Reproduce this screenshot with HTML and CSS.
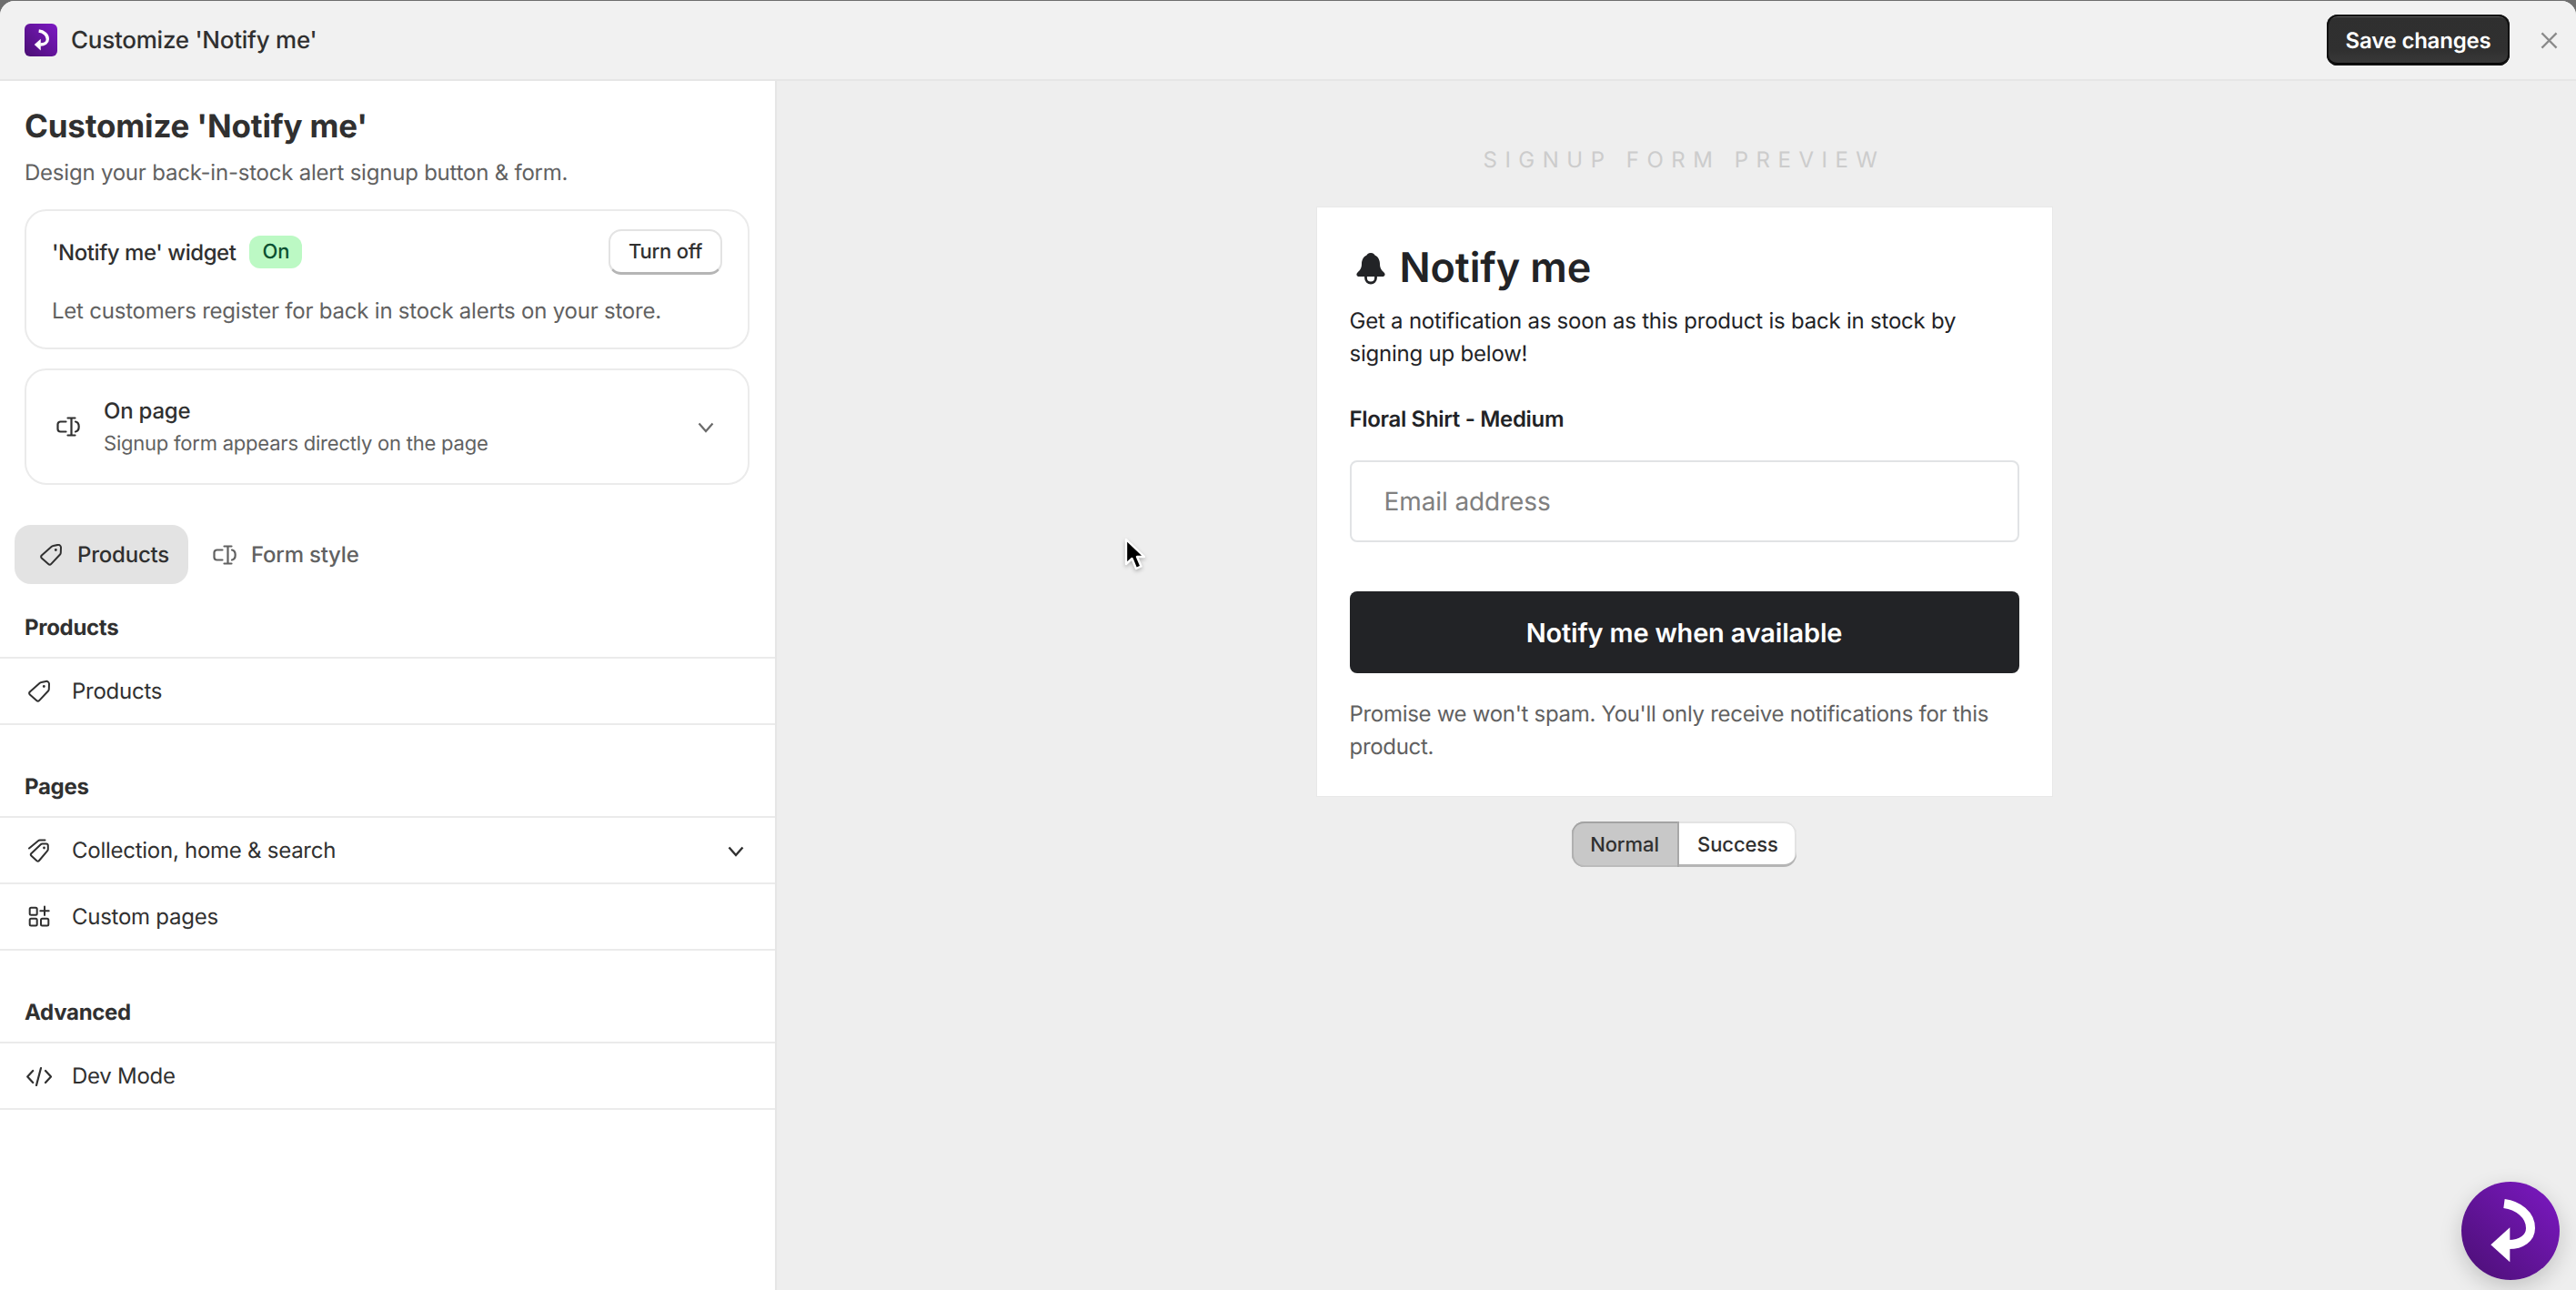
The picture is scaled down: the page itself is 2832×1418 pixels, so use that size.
FILE: index.html
```html
<!DOCTYPE html>
<html lang="en">
<head>
<meta charset="utf-8">
<title>Customize 'Notify me'</title>
<link rel="stylesheet" href="styles.css">
</head>
<body>
<svg class="defs" width="0" height="0">
  <defs>
    <linearGradient id="purple" x1="1" y1="0" x2="0" y2="1">
      <stop offset="0" stop-color="#7d19c4"/>
      <stop offset="1" stop-color="#4a0f73"/>
    </linearGradient>
    <symbol id="swirl" viewBox="0 0 108 108">
      <path d="M47 24C62 26 76 36 76 51C76 62 66 69 52 69" fill="none" stroke="#fff" stroke-width="10"/>
      <path d="M32.300 69.300L53.300 50.300V88.300Z" fill="#fff"/>
    </symbol>
    <symbol id="tag" viewBox="0 0 24 24">
      <path d="M14.500 2L19.500 0.900A3 3 0 0 1 23 3.500L22.800 9.500A3 3 0 0 1 22 11.500L12.300 21.900A2.200 2.200 0 0 1 9.200 22L1.800 15.500A2.300 2.300 0 0 1 1.800 12.500L12.500 3A4 4 0 0 1 14.500 2Z" fill="none" stroke="currentColor" stroke-width="2" stroke-linejoin="round"/>
      <circle cx="17.300" cy="6.500" r="1.400" fill="currentColor"/>
    </symbol>
    <symbol id="form" viewBox="0 0 26 24">
      <path d="M10.500 6.500H4.500A3 3 0 0 0 1.500 9.500V14.500A3 3 0 0 0 4.500 17.500H10.500M12.500 2.500H20.500M16.500 2.500V21.500M12.500 21.500H20.500M21 6.500C23.500 7 24.700 9.500 24.700 12C24.700 14.500 23.500 17 21 17.500" fill="none" stroke="currentColor" stroke-width="2.200" stroke-linecap="round"/>
    </symbol>
  </defs>
</svg>
<div class="app">
  <header class="topbar">
    <svg class="logo" viewBox="0 0 108 108"><rect width="108" height="108" rx="18" fill="url(#purple)"/><use href="#swirl" width="108" height="108"/></svg>
    <span class="topbar-title">Customize 'Notify me'</span>
    <button class="save">Save changes</button>
    <svg class="close" viewBox="0 0 20 20"><path d="M1.500 1.500L18.500 18.500M18.500 1.500L1.500 18.500" fill="none" stroke="#8a8a8a" stroke-width="2.400"/></svg>
  </header>
  <div class="main">
    <aside class="sidebar">
      <div class="intro">
        <h1 class="page-title">Customize 'Notify me'</h1>
        <p class="page-sub">Design your back-in-stock alert signup button &amp; form.</p>
        <section class="card widget-card">
          <div class="widget-row">
            <span class="widget-name">'Notify me' widget</span>
            <span class="badge">On</span>
            <button class="turn-off">Turn off</button>
          </div>
          <p class="widget-desc">Let customers register for back in stock alerts on your store.</p>
        </section>
        <section class="card mode-card">
          <svg class="mode-icon"><use href="#form"/></svg>
          <div class="mode-text">
            <div class="mode-name">On page</div>
            <div class="mode-desc">Signup form appears directly on the page</div>
          </div>
          <svg class="chev chev-grey" viewBox="0 0 18 12"><path d="M1.500 1.500L9 10L16.500 1.500" fill="none" stroke="currentColor" stroke-width="2.200"/></svg>
        </section>
      </div>
      <nav class="tabs">
        <div class="tab tab-active"><svg class="tab-icon"><use href="#tag"/></svg>Products</div>
        <div class="tab tab-idle"><svg class="tab-icon"><use href="#form"/></svg>Form style</div>
      </nav>
      <h2 class="group-title group-first">Products</h2>
      <div class="row"><svg class="row-icon"><use href="#tag"/></svg>Products</div>
      <h2 class="group-title">Pages</h2>
      <div class="row">
        <svg class="row-icon" viewBox="0 0 24 26"><path d="M15.500 5.500H20A1.800 1.800 0 0 1 21.800 7.300V11.500A2.500 2.500 0 0 1 21 13.300L12 24A1.800 1.800 0 0 1 9.500 24.200L3.500 18.700A1.800 1.800 0 0 1 3.300 16.200L13.800 6.200A2.500 2.500 0 0 1 15.500 5.500ZM1 10.500L11 2.300A2.500 2.500 0 0 1 13 1.500H18.500" fill="none" stroke="currentColor" stroke-width="2" stroke-linejoin="round" stroke-linecap="round"/><circle cx="17.500" cy="10" r="1.400" fill="currentColor"/></svg>
        Collection, home &amp; search
        <svg class="chev chev-dark" viewBox="0 0 18 12"><path d="M1.500 1.500L9 10L16.500 1.500" fill="none" stroke="currentColor" stroke-width="2.400"/></svg>
      </div>
      <div class="row">
        <svg class="row-icon" viewBox="0 0 24 26"><path d="M3.200 2.800H8.200A1.500 1.500 0 0 1 9.700 4.300V9.300A1.500 1.500 0 0 1 8.200 10.800H3.200A1.500 1.500 0 0 1 1.700 9.300V4.300A1.500 1.500 0 0 1 3.200 2.800ZM3.200 14.800H8.200A1.500 1.500 0 0 1 9.700 16.300V21A1.500 1.500 0 0 1 8.200 22.500H3.200A1.500 1.500 0 0 1 1.700 21V16.300A1.500 1.500 0 0 1 3.200 14.800ZM15.500 14.800H20.800A1.500 1.500 0 0 1 22.300 16.300V21A1.500 1.500 0 0 1 20.800 22.500H15.500A1.500 1.500 0 0 1 14 21V16.300A1.500 1.500 0 0 1 15.500 14.800ZM18 1.500V10.900M13.300 6.200H22.700" fill="none" stroke="currentColor" stroke-width="2" stroke-linecap="round"/></svg>
        Custom pages
      </div>
      <h2 class="group-title">Advanced</h2>
      <div class="row">
        <svg class="row-icon row-icon-wide" viewBox="0 0 28 24"><path d="M7.200 6L1.200 12.500L7.200 19M21 6L27 12.500L21 19M16 3L11 22" fill="none" stroke="currentColor" stroke-width="2.200" stroke-linecap="round" stroke-linejoin="round"/></svg>
        Dev Mode
      </div>
    </aside>
    <main class="preview">
      <div class="preview-label">SIGNUP FORM PREVIEW</div>
      <section class="form-card">
        <h2 class="form-title">
          <svg class="bell" viewBox="0 0 34 36"><path d="M17 0C20 0 21 1.500 21.500 2.500C25 4 27 8 27 12C27 17 29 19 31.500 21.500C33.500 23.500 32.500 26 30 26H4C1.500 26 0.500 23.500 2.500 21.500C5 19 7 17 7 12C7 8 9 4 12.500 2.500C13 1.500 14 0 17 0Z" fill="#222326"/><path d="M11.500 26V27.500A5.500 5.500 0 0 0 22.500 27.500V26" fill="none" stroke="#222326" stroke-width="2.800"/></svg>
          Notify me
        </h2>
        <p class="form-text">Get a notification as soon as this product is back in stock by signing up below!</p>
        <div class="form-product">Floral Shirt - Medium</div>
        <input class="form-input" type="text" placeholder="Email address">
        <button class="form-button">Notify me when available</button>
        <p class="form-note">Promise we won't spam. You'll only receive notifications for this product.</p>
      </section>
      <div class="segments">
        <button class="seg seg-on">Normal</button>
        <button class="seg seg-off">Success</button>
      </div>
    </main>
  </div>
</div>
<svg class="cursor" viewBox="0 0 24 37"><path d="M3 2V29L9.500 23L14 34L19.500 31.500L15 21H23Z" fill="#000" stroke="#fff" stroke-width="2.400" stroke-linejoin="round"/></svg>
<button class="fab" aria-label="Open"><svg class="fab-art" viewBox="0 0 108 108"><circle cx="54" cy="54" r="54" fill="url(#purple)"/><use href="#swirl" width="108" height="108"/></svg></button>
</body>
</html>
```
FILE: styles.css
```css
* { box-sizing: border-box; }
html, body { margin: 0; height: 100%; overflow: hidden; }
body { background: #6e6e6e; font-family: Inter, "Noto Sans", sans-serif; color: #303030; font-size: 24px; letter-spacing: -0.22px; text-rendering: geometricPrecision; }
button { font-family: inherit; cursor: pointer; text-rendering: geometricPrecision; letter-spacing: inherit; }
h1, h2, p { margin: 0; }
.defs { position: absolute; }

.app { height: 1417px; margin-top: 1px; background: #eeeeee; border-radius: 16px 16px 0 0; overflow: hidden; display: flex; flex-direction: column; }

.topbar { height: 88px; flex: none; display: flex; align-items: center; padding: 0 20px 0 27px; background: #f1f1f1; border-bottom: 2px solid #e6e6e6; }
.logo { width: 36px; height: 36px; flex: none; }
.topbar-title { margin-left: 15px; padding-top: 2px; font-size: 26px; font-weight: 550; line-height: 36px; letter-spacing: -0.25px; }
.save { margin-left: auto; width: 201px; height: 56px; border-radius: 12px; border: 0; color: #fff; font-size: 24px; font-weight: 600; padding: 0; background: linear-gradient(#2f2f2f, #303030 70%, #3a3a3a); box-shadow: inset 0 0 0 2px #111, inset 0 4px 0 -1px #5a5a5a, inset 0 -3px 0 #000; }
.close { width: 19px; height: 19px; margin-left: 34px; flex: none; }

.main { flex: 1; display: flex; min-height: 0; }
.sidebar { width: 854px; flex: none; background: #fff; border-right: 2px solid #e6e6e6; }
.intro { padding: 28px 27px 0; }
.page-title { font-size: 35px; line-height: 44px; font-weight: 650; color: #303030; letter-spacing: -0.18px; }
.page-sub { margin-top: 13px; line-height: 32px; color: #616161; }

.card { border: 2px solid #ebebeb; border-radius: 24px; width: 797px; background: #fff; }
.widget-card { margin-top: 24px; height: 154px; padding: 20px 28px 0; }
.widget-row { display: flex; align-items: center; height: 50px; }
.widget-name { font-weight: 500; letter-spacing: -0.45px; }
.badge { margin-left: 15px; width: 58px; height: 36px; line-height: 36px; text-align: center; background: #bcf9c4; color: #0c5132; border-radius: 12px; font-size: 22px; font-weight: 450; }
.turn-off { margin-left: auto; width: 125px; height: 50px; padding: 0; background: #fff; color: #303030; font-size: 22px; font-weight: 500; border: 2px solid #e3e3e3; border-bottom: 3px solid #b5b5b5; border-radius: 14px; }
.widget-desc { margin-top: 24px; line-height: 32px; color: #616161; }

.mode-card { margin-top: 21px; height: 128px; display: flex; align-items: center; padding: 0 28px 0 33px; }
.mode-icon { width: 26px; height: 24px; flex: none; color: #303030; }
.mode-text { margin-left: 26px; padding-top: 2px; }
.mode-name { font-weight: 500; font-size: 24px; line-height: 32px; }
.mode-desc { margin-top: 4px; font-size: 22px; line-height: 32px; color: #616161; }
.chev { flex: none; margin-left: auto; }
.chev-grey { width: 18px; height: 12px; color: #6b6b6b; margin-top: 2px; margin-right: 9px; }
.chev-dark { width: 18px; height: 12px; color: #303030; margin-top: 2px; margin-right: 2px; }

.tabs { display: flex; gap: 12px; padding: 44px 0 0 16px; }
.tab { height: 65px; display: flex; align-items: center; padding: 0 22px 0 27px; gap: 16px; border-radius: 18px; font-weight: 450; }
.tab-active { width: 191px; background: #e3e3e3; color: #303030; }
.tab-idle { padding-left: 15px; color: #616161; }
.tab-icon { width: 26px; height: 24px; flex: none; }

.group-title { font-size: 24px; font-weight: 650; line-height: 32px; letter-spacing: -0.3px; padding: 0 27px; margin-top: 52px; height: 50px; border-bottom: 2px solid #ebebeb; }
.group-first { margin-top: 32px; }
.row { height: 73px; display: flex; align-items: center; padding: 0 32px 0 31px; border-bottom: 2px solid #ebebeb; color: #303030; letter-spacing: -0.26px; }
.row-icon { width: 24px; height: 26px; flex: none; margin-right: 24px; }
.row-icon-wide { width: 28px; margin-left: -2px; margin-right: 22px; }

.preview { flex: 1; min-width: 0; display: flex; flex-direction: column; align-items: center; padding-left: 17px; }
.preview-label { margin-top: 72px; font-size: 24px; line-height: 30px; letter-spacing: 8.500px; color: #cccccc; }
.form-card { margin-top: 36px; width: 810px; height: 649px; background: #fff; border: 1px solid #e8e8e8; padding: 36px 36px 0; color: #222326; }
.form-title { display: flex; align-items: center; font-size: 45px; line-height: 60px; font-weight: 600; padding-left: 6px; gap: 15px; letter-spacing: -0.1px; }
.bell { width: 34px; height: 36px; flex: none; margin-top: 4px; }
.form-text { margin-top: 11px; line-height: 36px; }
.form-product { margin-top: 36px; font-weight: 600; line-height: 36px; letter-spacing: -0.33px; }
.form-input { display: block; width: 736px; height: 90px; margin-top: 27px; padding: 0 36px; border: 2px solid #e1e3e5; border-radius: 8px; background: #fff; font-family: inherit; font-size: 28px; letter-spacing: -0.1px; color: #222326; outline: none; text-rendering: geometricPrecision; }
.form-input::placeholder { color: #808080; opacity: 1; }
.form-button { display: block; width: 736px; height: 90px; margin-top: 54px; border: 0; border-radius: 8px; background: #222326; color: #fff; font-size: 29px; font-weight: 600; letter-spacing: -0.2px; }
.form-note { margin-top: 27px; line-height: 36px; color: #616161; letter-spacing: -0.3px; }

.segments { margin-top: 27px; display: flex; height: 50px; }
.seg { height: 50px; font-size: 22px; font-weight: 500; padding: 2px 0 0; color: #303030; letter-spacing: -0.1px; }
.seg-on { width: 118px; background: #c8c8c8; border: 0; border-radius: 14px 0 0 14px; box-shadow: inset 0 2px 0 #a3a3a3, inset 2px 0 0 #b0b0b0, inset 0 -2px 0 #bbbbbb; border-right: 2px solid #a8a8a8; }
.seg-off { width: 129px; background: #fff; border: 0; border-radius: 0 14px 14px 0; box-shadow: inset 0 -3px 0 #b5b5b5, inset -2px 0 0 #e3e3e3, inset 0 2px 0 #e3e3e3; }

.cursor { position: absolute; left: 1235px; top: 591px; width: 24px; height: 37px; filter: drop-shadow(0 2px 2px rgba(0,0,0,.25)); }
.fab { position: absolute; left: 2706px; top: 1299px; width: 108px; height: 108px; padding: 0; border: 0; background: none; border-radius: 50%; box-shadow: 0 8px 24px rgba(0,0,0,.18); }
.fab-art { display: block; width: 108px; height: 108px; }
```
